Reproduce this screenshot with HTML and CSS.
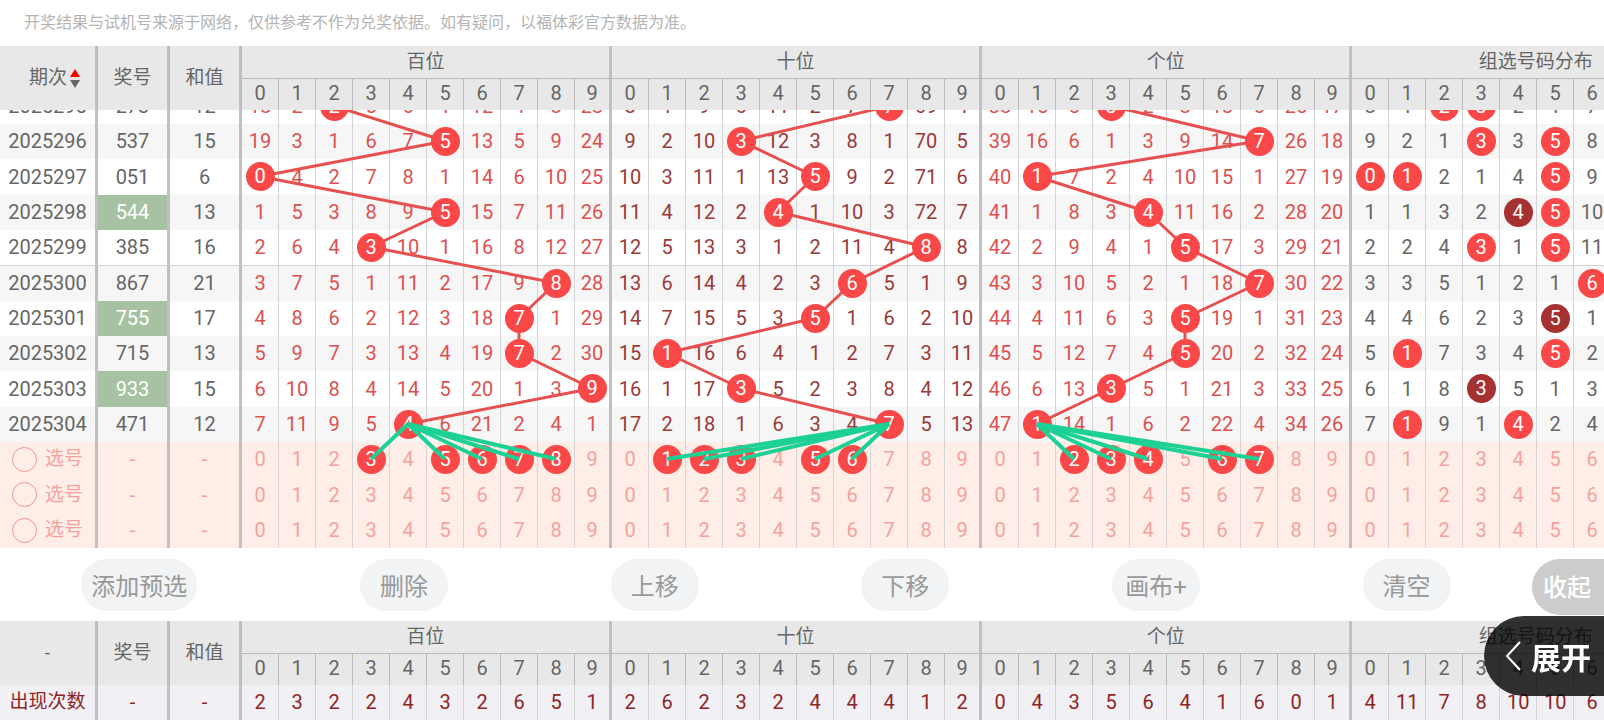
FILE: index.html
```html
<!DOCTYPE html>
<html lang="zh-CN">
<head>
	<meta charset="UTF-8">
	<meta name="viewport" content="width=device-width, initial-scale=1">
	<title>走势图</title>
	<link rel="stylesheet" href="styles.css">
</head>
<body>
<p class="notice">开奖结果与试机号来源于网络，仅供参考不作为兑奖依据。如有疑问，以福体彩官方数据为准。</p>

<div class="chart">
	<table class="grid" id="head"></table>
	<div class="viewport">
		<div class="trend" id="trend">
			<table class="grid" id="body"></table>
			<svg class="lines" id="lines"></svg>
			<svg class="lines picks" id="pickLines"></svg>
		</div>
	</div>
</div>

<div class="toolbar">
	<div class="tools">
		<button type="button" class="tool">添加预选</button>
		<button type="button" class="tool">删除</button>
		<button type="button" class="tool">上移</button>
		<button type="button" class="tool">下移</button>
		<button type="button" class="tool">画布+</button>
		<button type="button" class="tool">清空</button>
	</div>
	<button type="button" class="fold">收起</button>
</div>

<div class="chart">
	<table class="grid" id="foot"></table>
</div>

<button type="button" class="expand">
	<svg width="16" height="30" viewBox="0 0 16 30"><path d="M15 1L2 15L15 29" fill="none" stroke="#fff" stroke-width="2"/></svg>
	<span>展开</span>
</button>

<script src="chart.js"></script>
</body>
</html>
```
FILE: styles.css
```css
*{box-sizing:border-box;}
body{margin:0;overflow-x:hidden;background:#fff;color:#666;font-family:Roboto,"Noto Sans CJK SC",sans-serif;font-size:20px;}
button{margin:0;padding:0;border:0;background:none;color:inherit;font:inherit;cursor:pointer;}
.notice{margin:0;padding:0 24px;height:46px;line-height:46px;font-size:16px;color:#b4b4b4;white-space:nowrap;}

.chart{overflow:hidden;}
.grid{width:1722px;table-layout:fixed;border-collapse:separate;border-spacing:0;}
.grid th,.grid td{height:35px;padding:0 0 1px;border-right:1px solid #d4d4d4;line-height:24px;font-weight:400;text-align:center;white-space:nowrap;}
.grid .thick{border-right:3px solid #c0c0c0;}
.col-issue{width:98px;}
.col-info{width:72px;}
.col-num{width:37px;}

/* header */
.grid thead th{height:31px;padding-bottom:3px;background:#e8e8e8;border-right-color:#bcbcbc;}
.grid thead tr:first-child th{height:33px;padding-bottom:0;}
.grid thead .group{border-bottom:1px solid #bcbcbc;}
.grid thead .label,.grid thead .group{font-size:19px;}
.sort{display:inline-flex;align-items:center;gap:3px;padding-left:14px;}

/* history rows */
.viewport{display:flex;flex-direction:column;justify-content:flex-end;height:438px;overflow:hidden;}
.trend{position:relative;width:1722px;}
#body tr:nth-child(3n) td{height:36px;}
#body tr:nth-child(even) td{background:#f6f6f6;}
#body .divide td{border-top:1px solid #d4d4d4;}
#body tr .pair,#body tr:nth-child(even) .pair{background:#a6c2a2;color:#fff;}
.g0,.g2{color:#dc5150;}
.g1{color:#993a39;}
.ball{display:block;position:relative;z-index:2;width:29px;height:29px;margin:0 auto;border-radius:50%;background:#fa4848;color:#fff;line-height:28px;}
.ball.double{background:#a53131;}
.lines{position:absolute;top:0;left:0;z-index:1;width:100%;height:100%;pointer-events:none;}
.lines line{stroke:#e65150;stroke-width:3;}
.picks{z-index:3;}
.picks line{stroke:#1dd094;stroke-width:4;}

/* pick rows */
#body tr.pick td,#body tr.pick:nth-child(even) td{background:#feeee7;color:#f4a2a0;}
#body .pick .ball{color:#fff;}
.choose{display:flex;align-items:center;gap:8px;padding-left:12px;font-size:19px;}
.choose input{appearance:none;width:25px;height:25px;margin:0;border:1px solid #f29693;border-radius:50%;}

/* summary */
#foot tbody td{padding-bottom:2px;background:#f1f0f5;color:#8f2424;}
#foot tbody td:first-child{font-size:19px;}

.toolbar{display:flex;align-items:flex-start;height:73px;padding-top:11px;}
.tools{display:flex;flex:1;justify-content:space-around;}
.tool{min-width:88px;height:52px;padding:0 10px 2px;border-radius:26px;background:#f1f3f5;color:#999;font-size:24px;}
.fold{width:72px;height:56px;padding:0 2px 3px 0;border-radius:28px 0 0 28px;background:#ccc;color:#fff;font-size:24px;font-weight:500;}

.expand{display:flex;align-items:center;gap:10px;position:fixed;right:0;bottom:24px;z-index:10;width:120px;height:80px;padding-left:21px;border-radius:40px 0 0 40px;background:rgba(0,0,0,.8);color:#fff;font-size:30px;font-weight:700;}
```
FILE: chart.js
```js
var groups = ["百位", "十位", "个位", "组选号码分布"];

// misses of every digit on the first listed issue, 0 = drawn
var miss = [
	[18, 2, 0, 5, 6, 1, 12, 4, 8, 23],
	[8, 1, 9, 6, 11, 2, 7, 0, 69, 4],
	[38, 15, 5, 0, 2, 8, 13, 6, 25, 17],
	[8, 1, 0, 0, 2, 1, 7, 0, 3, 4]
];
var first = 2025295;
var draws = ["273", "537", "051", "544", "385", "867", "755", "715", "933", "471"];
var picks = [
	[[3, 5, 6, 7, 8], [1, 2, 3, 5, 6], [2, 3, 4, 6, 7], []],
	[[], [], [], []],
	[[], [], [], []]
];
var counts = [
	[2, 3, 2, 2, 4, 3, 2, 6, 5, 1],
	[2, 6, 2, 3, 2, 4, 4, 4, 1, 2],
	[0, 4, 3, 5, 6, 4, 1, 6, 0, 1],
	[4, 11, 7, 8, 10, 10, 6, 12, 6, 4]
];

function $(id) {
	return document.getElementById(id);
}

function cols() {
	var html = '<colgroup><col class="col-issue"><col class="col-info"><col class="col-info">';
	for (var i = 0; i < 40; i++) html += '<col class="col-num">';
	return html + "</colgroup>";
}

function header(title) {
	var html = '<thead><tr><th rowspan="2" class="thick label">' + title + "</th>" +
		'<th rowspan="2" class="thick label">奖号</th><th rowspan="2" class="thick label">和值</th>';
	groups.forEach(function (name) {
		html += '<th colspan="10" class="thick group">' + name + "</th>";
	});
	html += "</tr><tr>";
	groups.forEach(function () {
		for (var n = 0; n < 10; n++) html += "<th" + (n == 9 ? ' class="thick"' : "") + ">" + n + "</th>";
	});
	return html + "</tr></thead>";
}

function cell(g, n, content) {
	return '<td class="g' + g + (n == 9 ? " thick" : "") + '">' + content + "</td>";
}

function ball(g, n, cls) {
	return '<span class="ball' + (cls || "") + '" data-group="' + g + '">' + n + "</span>";
}

function drawRow(num, index) {
	var d = num.split("").map(Number);
	var pair = d[0] == d[1] || d[1] == d[2] || d[0] == d[2];
	var issue = first + index;
	var html = "<tr" + (issue % 5 == 0 && index ? ' class="divide"' : "") + '><td class="thick">' + issue + "</td>" +
		'<td class="thick' + (pair ? " pair" : "") + '">' + num + "</td>" +
		'<td class="thick">' + (d[0] + d[1] + d[2]) + "</td>";
	for (var g = 0; g < 4; g++) {
		for (var n = 0; n < 10; n++) {
			var times = d.filter(function (v, i) { return v == n && (g == 3 || i == g); }).length;
			if (index) miss[g][n] = times ? 0 : miss[g][n] + 1;
			html += cell(g, n, times ? ball(g, n, times > 1 ? " double" : "") : miss[g][n]);
		}
	}
	return html + "</tr>";
}

function pickRow(row, index) {
	var html = '<tr class="pick"><td class="thick"><label class="choose"><input type="radio" name="pick" value="' + index + '">选号</label></td>' +
		'<td class="thick">-</td><td class="thick">-</td>';
	for (var g = 0; g < 4; g++) {
		for (var n = 0; n < 10; n++) {
			html += cell(g, n, row[g].indexOf(n) > -1 ? ball(g, n) : n);
		}
	}
	return html + "</tr>";
}

function line(a, b) {
	var box = $("trend").getBoundingClientRect();
	var p = a.getBoundingClientRect(), q = b.getBoundingClientRect();
	return '<line x1="' + (p.left - box.left + p.width / 2) + '" y1="' + (p.top - box.top + p.height / 2) +
		'" x2="' + (q.left - box.left + q.width / 2) + '" y2="' + (q.top - box.top + q.height / 2) + '"/>';
}

function connect() {
	var rows = $("body").rows, red = "", green = "";
	for (var g = 0; g < 3; g++) {
		var sel = '.ball[data-group="' + g + '"]', last = null;
		for (var i = 0; i < draws.length; i++) {
			var b = rows[i].querySelector(sel);
			if (last) red += line(last, b);
			last = b;
		}
		rows[draws.length].querySelectorAll(sel).forEach(function (p) {
			green += line(last, p);
		});
	}
	$("lines").innerHTML = red;
	$("pickLines").innerHTML = green;
}

var sort = '<button type="button" class="sort">期次<svg width="10" height="20" viewBox="0 0 10 20">' +
	'<path d="M5 1L10 9H0Z" fill="#f00"/><path d="M5 20L10 12H0Z" fill="#666"/></svg></button>';

$("head").innerHTML = cols() + header(sort);
$("body").innerHTML = cols() + "<tbody>" + draws.map(drawRow).join("") + picks.map(pickRow).join("") + "</tbody>";

var total = '<tr><td class="thick">出现次数</td><td class="thick">-</td><td class="thick">-</td>';
counts.forEach(function (list, g) {
	list.forEach(function (v, n) {
		total += cell(g, n, v);
	});
});
$("foot").innerHTML = cols() + header("-") + "<tbody>" + total + "</tr></tbody>";

connect();
```
